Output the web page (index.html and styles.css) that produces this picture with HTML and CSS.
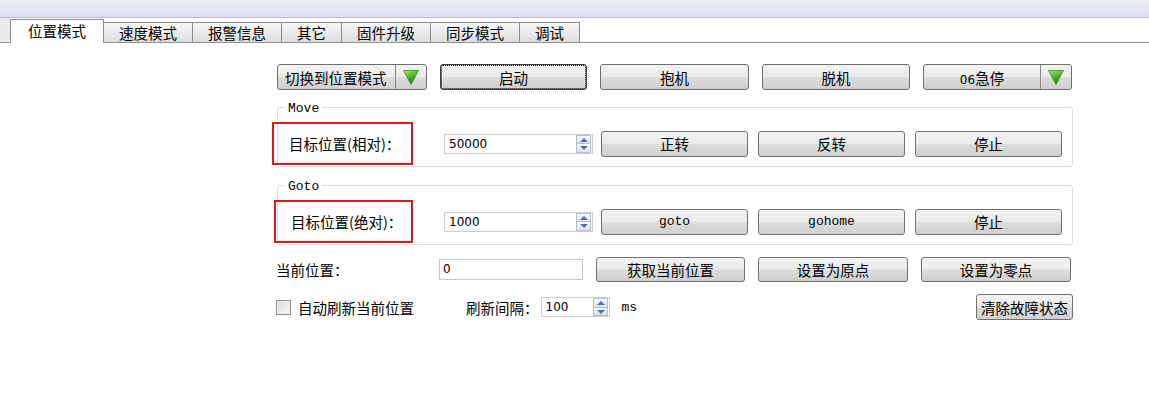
FILE: index.html
```html
<!DOCTYPE html>
<html lang="zh-CN">
<head>
    <meta charset="UTF-8">
    <title>位置模式</title>
    <link rel="stylesheet" href="styles.css">
</head>
<body>
    <div class="topbar"></div>

    <!-- tabs -->
    <div class="tabbar">
        <div class="tab active">位置模式</div>
        <div class="tab">速度模式</div>
        <div class="tab">报警信息</div>
        <div class="tab">其它</div>
        <div class="tab">固件升级</div>
        <div class="tab">同步模式</div>
        <div class="tab">调试</div>
    </div>

    <div class="panel">
        <div class="row row-top">
            <div class="combo combo-mode">
                <span class="combo-text">切换到位置模式</span>
                <span class="combo-arrow">
                    <svg width="16" height="15" viewBox="0 0 16 15">
                        <defs>
                            <linearGradient id="g1" x1="0" y1="0" x2="0.4" y2="1">
                                <stop offset="0" stop-color="#a6ea6c"/>
                                <stop offset="0.5" stop-color="#4fb82c"/>
                                <stop offset="1" stop-color="#1f7a10"/>
                            </linearGradient>
                        </defs>
                        <polygon points="0.5,0.5 15.5,0.5 8,14.5" fill="url(#g1)" stroke="#3d8e22" stroke-width="0.8"/>
                    </svg>
                </span>
            </div>
            <button class="btn btn-focus w-start">启动</button>
            <button class="btn w-hold">抱机</button>
            <button class="btn w-free">脱机</button>
            <div class="combo combo-stop">
                <span class="combo-text center"><span><span class="num">06</span>急停</span></span>
                <span class="combo-arrow">
                    <svg width="16" height="15" viewBox="0 0 16 15">
                        <defs>
                            <linearGradient id="g2" x1="0" y1="0" x2="0.4" y2="1">
                                <stop offset="0" stop-color="#a6ea6c"/>
                                <stop offset="0.5" stop-color="#4fb82c"/>
                                <stop offset="1" stop-color="#1f7a10"/>
                            </linearGradient>
                        </defs>
                        <polygon points="0.5,0.5 15.5,0.5 8,14.5" fill="url(#g2)" stroke="#3d8e22" stroke-width="0.8"/>
                    </svg>
                </span>
            </div>
        </div>

        <fieldset class="group group-move">
            <legend>Move</legend>
            <div class="group-row">
                <div class="mark">目标位置(相对)：</div>
                <div class="spin spin-pos">
                    <span class="spin-value">50000</span>
                    <span class="spin-btns"><span class="up"></span><span class="down"></span></span>
                </div>
                <button class="btn w-act first">正转</button>
                <button class="btn w-act">反转</button>
                <button class="btn w-act">停止</button>
            </div>
        </fieldset>

        <fieldset class="group group-goto">
            <legend>Goto</legend>
            <div class="group-row">
                <div class="mark">目标位置(绝对)：</div>
                <div class="spin spin-pos">
                    <span class="spin-value">1000</span>
                    <span class="spin-btns"><span class="up"></span><span class="down"></span></span>
                </div>
                <button class="btn w-act first mono">goto</button>
                <button class="btn w-act mono">gohome</button>
                <button class="btn w-act">停止</button>
            </div>
        </fieldset>

        <div class="row row-cur">
            <span class="label-cur">当前位置：</span>
            <div class="lineedit">0</div>
            <button class="btn w-cur first">获取当前位置</button>
            <button class="btn w-cur">设置为原点</button>
            <button class="btn w-cur">设置为零点</button>
        </div>

        <div class="row row-bottom">
            <span class="checkbox"></span>
            <span class="check-label">自动刷新当前位置</span>
            <span class="label-interval">刷新间隔：</span>
            <div class="spin spin-interval">
                <span class="spin-value">100</span>
                <span class="spin-btns"><span class="up"></span><span class="down"></span></span>
            </div>
            <span class="unit">ms</span>
            <button class="btn btn-clear">清除故障状态</button>
        </div>
    </div>
</body>
</html>
```

FILE: styles.css
```css
* {
    box-sizing: border-box;
}

body {
    margin: 0;
    font-family: "Noto Sans CJK SC", "DejaVu Sans", sans-serif;
    font-size: 14.5px;
    color: #000;
    background-color: #fff;
}

.topbar {
    height: 18px;
    background: linear-gradient(#eceef8, #dde1ef);
    border-bottom: 1px solid #b9bccb;
}

.tabbar {
    display: flex;
    align-items: flex-end;
    height: 25px;
    padding-left: 10px;
    border-bottom: 1px solid #8f8f8f;
    background: linear-gradient(90deg, #ececec 0, #ececec 10px, #fff 10px);
}

.tab {
    height: 20px;
    line-height: 19px;
    padding: 0 15px;
    margin-right: -1px;
    border: 1px solid #8c8c8c;
    border-bottom: none;
    background: linear-gradient(#f8f8f8, #dedede);
    white-space: nowrap;
}

.tab.active {
    height: 24px;
    line-height: 22px;
    padding: 0 17px;
    margin-bottom: -1px;
    background: #fff;
    position: relative;
    z-index: 1;
}

.panel {
    margin-left: 272px;
    width: 801px;
}

.row {
    display: flex;
    align-items: center;
}

.row-top {
    margin-top: 21px;
    padding-left: 5px;
    gap: 13px;
}

.btn {
    height: 26px;
    padding: 0;
    font: inherit;
    color: #000;
    border: 1px solid #707070;
    border-radius: 3px;
    background: linear-gradient(#f3f3f3 0%, #ebebeb 48%, #dddddd 52%, #cfcfcf 100%);
}

.btn-focus {
    border-color: #3a3a3a;
    outline: 1px dotted #000;
    outline-offset: -2px;
}

.w-start { width: 147px; }
.w-hold { width: 149px; }
.w-free { width: 148px; }

.combo {
    display: flex;
    height: 26px;
    border: 1px solid #707070;
    border-radius: 3px;
    background: linear-gradient(#f3f3f3 0%, #ebebeb 48%, #dddddd 52%, #cfcfcf 100%);
}

.combo-mode { width: 150px; }
.combo-stop { width: 149px; }

.combo-text {
    flex: 1;
    display: flex;
    align-items: center;
    padding-left: 7px;
    white-space: nowrap;
}

.combo-text.center {
    justify-content: center;
    padding-left: 0;
}

.num {
    font-family: "DejaVu Sans", sans-serif;
    font-size: 12px;
}

.combo-arrow {
    width: 31px;
    display: flex;
    align-items: center;
    justify-content: center;
    border-left: 1px solid #8a8a8a;
}

/* group boxes */
.group {
    width: 796px;
    margin: 10px 0 0 5px;
    padding: 0 0 1px 0;
    border: 1px solid #d5dfe5;
    border-radius: 3px;
    min-width: 0;
}

.group-goto {
    margin-top: 11px;
}

.group legend {
    margin-left: 7px;
    padding: 0 3px;
    font-family: "Liberation Mono", monospace;
    font-size: 13px;
    line-height: 14px;
    position: relative;
    top: 2px;
}

.group-row {
    display: flex;
    align-items: center;
    height: 43px;
    margin-top: 8px;
}

.mark {
    width: 141px;
    height: 43px;
    margin-left: -6px;
    padding-left: 15px;
    display: flex;
    align-items: center;
    border: 2px solid #e2141c;
    white-space: nowrap;
}

.group-goto .mark {
    margin-left: -4px;
    width: 139px;
}

.spin {
    display: flex;
    align-items: center;
    height: 20px;
    border: 1px solid #c8ced8;
    background: #fff;
}

.spin-pos {
    width: 149px;
    margin-left: 31px;
}

.spin-value {
    flex: 1;
    padding-left: 4px;
    font-family: "DejaVu Sans", sans-serif;
    font-size: 12px;
}

.spin-btns {
    display: flex;
    flex-direction: column;
    width: 15px;
    height: 18px;
    margin-right: 1px;
}

.spin-btns span {
    flex: 1;
    position: relative;
    border: 1px solid #b5bfd0;
    background: linear-gradient(#fbfbfd, #dde2ea);
}

.spin-btns .up {
    border-bottom: none;
}

.spin-btns .up::after,
.spin-btns .down::after {
    content: "";
    position: absolute;
    left: 3px;
    border-left: 4px solid transparent;
    border-right: 4px solid transparent;
}

.spin-btns .up::after {
    top: 2px;
    border-bottom: 4px solid #4f6eb3;
}

.spin-btns .down::after {
    top: 2px;
    border-top: 4px solid #4f6eb3;
}

.w-act {
    width: 147px;
    margin-left: 10px;
}

.w-act.first {
    margin-left: 8px;
}

.mono {
    font-family: "Liberation Mono", monospace;
    font-size: 13px;
}

.row-cur {
    margin-top: 12px;
    padding-left: 4px;
}

.label-cur {
    width: 163px;
}

.lineedit {
    width: 144px;
    height: 21px;
    padding-left: 3px;
    border: 1px solid #c3c8d0;
    font-family: "DejaVu Sans", sans-serif;
    font-size: 12px;
    line-height: 19px;
}

.w-cur {
    width: 150px;
    height: 25px;
    margin-left: 13px;
}

.w-cur.first {
    width: 149px;
}

.row-bottom {
    margin-top: 12px;
    padding-left: 4px;
}

.checkbox {
    width: 15px;
    height: 15px;
    border: 1px solid #8e8f8f;
    background: linear-gradient(135deg, #d6d6d6, #f8f8f8);
    box-shadow: inset 0 0 0 1px #f0f0f0;
}

.check-label {
    margin-left: 7px;
    width: 168px;
}

.spin-interval {
    width: 69px;
    margin-left: 2px;
}

.unit {
    margin-left: 12px;
    font-family: "Liberation Mono", monospace;
    font-size: 13px;
}

.btn-clear {
    margin-left: auto;
    width: 97px;
}
```
